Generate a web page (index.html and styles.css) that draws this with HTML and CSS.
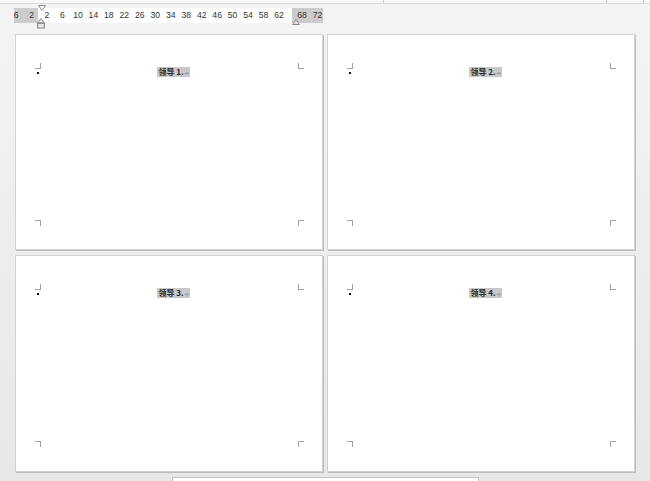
FILE: index.html
```html
<!DOCTYPE html>
<html lang="zh">
<head>
<meta charset="utf-8">
<title>标签</title>
<link rel="stylesheet" href="styles.css">
</head>
<body>
<div class="topbar">
  <span class="tick t1"></span><span class="tick t2"></span><span class="tick t3"></span>
</div>
<div class="ruler">
  <div class="track">
    <div class="margin-l"></div>
    <div class="body-area"></div>
    <div class="margin-r"></div>
  </div>
  <div class="labels">
    <span>6</span><span>2</span><span>2</span><span>6</span><span>10</span><span>14</span><span>18</span><span>22</span><span>26</span><span>30</span><span>34</span><span>38</span><span>42</span><span>46</span><span>50</span><span>54</span><span>58</span><span>62</span><span class="skip">68</span><span>72</span>
  </div>
  <svg class="mk mk-top" width="8" height="7" viewBox="0 0 8 7"><polygon points="0.5,0.5 7.5,0.5 4,5.5" fill="#fff" stroke="#8a8a8a"/></svg>
  <svg class="mk mk-bot" width="8" height="11" viewBox="0 0 8 11"><polygon points="4,0.5 7.5,5 0.5,5" fill="#e2e2e2" stroke="#8a8a8a"/><rect x="0.5" y="5.5" width="7" height="4.5" fill="#e2e2e2" stroke="#8a8a8a"/></svg>
  <svg class="mk mk-right" width="8" height="6" viewBox="0 0 8 6"><polygon points="4,0.5 7.5,5.5 0.5,5.5" fill="#e2e2e2" stroke="#8a8a8a"/></svg>
</div>
<div class="pages">
  <div class="page">
    <span class="mark tl"></span><span class="mark tr"></span><span class="mark bl"></span><span class="mark br"></span><span class="dot"></span>
    <div class="line"><span class="hl">领导 1.<small>↵</small></span></div>
  </div>
  <div class="page">
    <span class="mark tl"></span><span class="mark tr"></span><span class="mark bl"></span><span class="mark br"></span><span class="dot"></span>
    <div class="line"><span class="hl">领导 2.<small>↵</small></span></div>
  </div>
  <div class="page">
    <span class="mark tl"></span><span class="mark tr"></span><span class="mark bl"></span><span class="mark br"></span><span class="dot"></span>
    <div class="line"><span class="hl">领导 3.<small>↵</small></span></div>
  </div>
  <div class="page">
    <span class="mark tl"></span><span class="mark tr"></span><span class="mark bl"></span><span class="mark br"></span><span class="dot"></span>
    <div class="line"><span class="hl">领导 4.<small>↵</small></span></div>
  </div>
</div>
<div class="next-page"></div>
</body>
</html>
```

FILE: styles.css
```css
html, body {
  margin: 0;
  padding: 0;
}
body {
  width: 650px;
  height: 481px;
  overflow: hidden;
  background: linear-gradient(#f4f4f4, #e7e7e7);
  font-family: "Liberation Sans", Arial, sans-serif;
}
.topbar {
  height: 3px;
  background: #f8f8f8;
  border-bottom: 1px solid #dadada;
  display: flex;
}
.tick {
  width: 1px;
  height: 3px;
  background: #cfcfcf;
}
.t1 { margin-left: 383px; }
.t2 { margin-left: 222px; }
.t3 { margin-left: 36px; }

.ruler {
  position: relative;
  margin: 4px 0 0 14px;
  width: 309px;
  height: 15px;
}
.track {
  display: flex;
  height: 15px;
}
.margin-l {
  width: 24px;
  background: #cccccc;
}
.body-area {
  width: 254px;
  background: #ffffff;
}
.margin-r {
  flex: 1;
  background: #cccccc;
}
.labels {
  position: absolute;
  top: 0;
  left: -5.7px;
  display: flex;
  height: 15px;
  line-height: 15px;
  font-size: 8.6px;
  color: #333333;
}
.labels span {
  width: 15.47px;
  text-align: center;
}
.labels .skip {
  margin-left: 7.6px;
}
.mk {
  position: absolute;
  display: block;
}
.mk-top { left: 24px; top: -3px; }
.mk-bot { left: 23px; top: 10px; }
.mk-right { left: 278px; top: 11px; }

.pages {
  margin-top: 11px;
  padding-left: 15px;
  display: grid;
  grid-template-columns: 308px 308px;
  grid-template-rows: 216px 217px;
  column-gap: 4px;
  row-gap: 5px;
}
.page {
  position: relative;
  box-sizing: border-box;
  background: #ffffff;
  border: 1px solid #d2d2d2;
  box-shadow: 1px 1px 0 #bdbdbd;
  padding: 32px 25px 0 34px;
}
.mark {
  position: absolute;
  width: 6px;
  height: 6px;
  box-sizing: border-box;
  border: 0 solid #a3a3a3;
}
.tl { left: 19px; top: 28px; border-right-width: 1px; border-bottom-width: 1px; }
.tr { left: 282px; top: 28px; border-left-width: 1px; border-bottom-width: 1px; }
.bl { left: 19px; top: 185px; border-top-width: 1px; border-right-width: 1px; }
.br { left: 282px; top: 185px; border-top-width: 1px; border-left-width: 1px; }
.dot {
  position: absolute;
  left: 21px;
  top: 37px;
  width: 2px;
  height: 2px;
  background: #111;
}
.line {
  display: flex;
  justify-content: center;
  height: 10px;
}
.hl {
  display: block;
  height: 10px;
  line-height: 10px;
  padding: 0 1px;
  background: #c8c8c8;
  font-family: "Noto Sans CJK SC", "Liberation Sans", sans-serif;
  font-size: 8px;
  font-weight: 700;
  color: #2a2a2a;
}
.hl small {
  font-size: 5px;
  font-weight: 400;
  color: #777;
  margin-left: 1px;
}
.next-page {
  box-sizing: border-box;
  width: 307px;
  height: 20px;
  margin: 5px 0 0 172px;
  background: #ffffff;
  border: 1px solid #c4c4c4;
}
```
